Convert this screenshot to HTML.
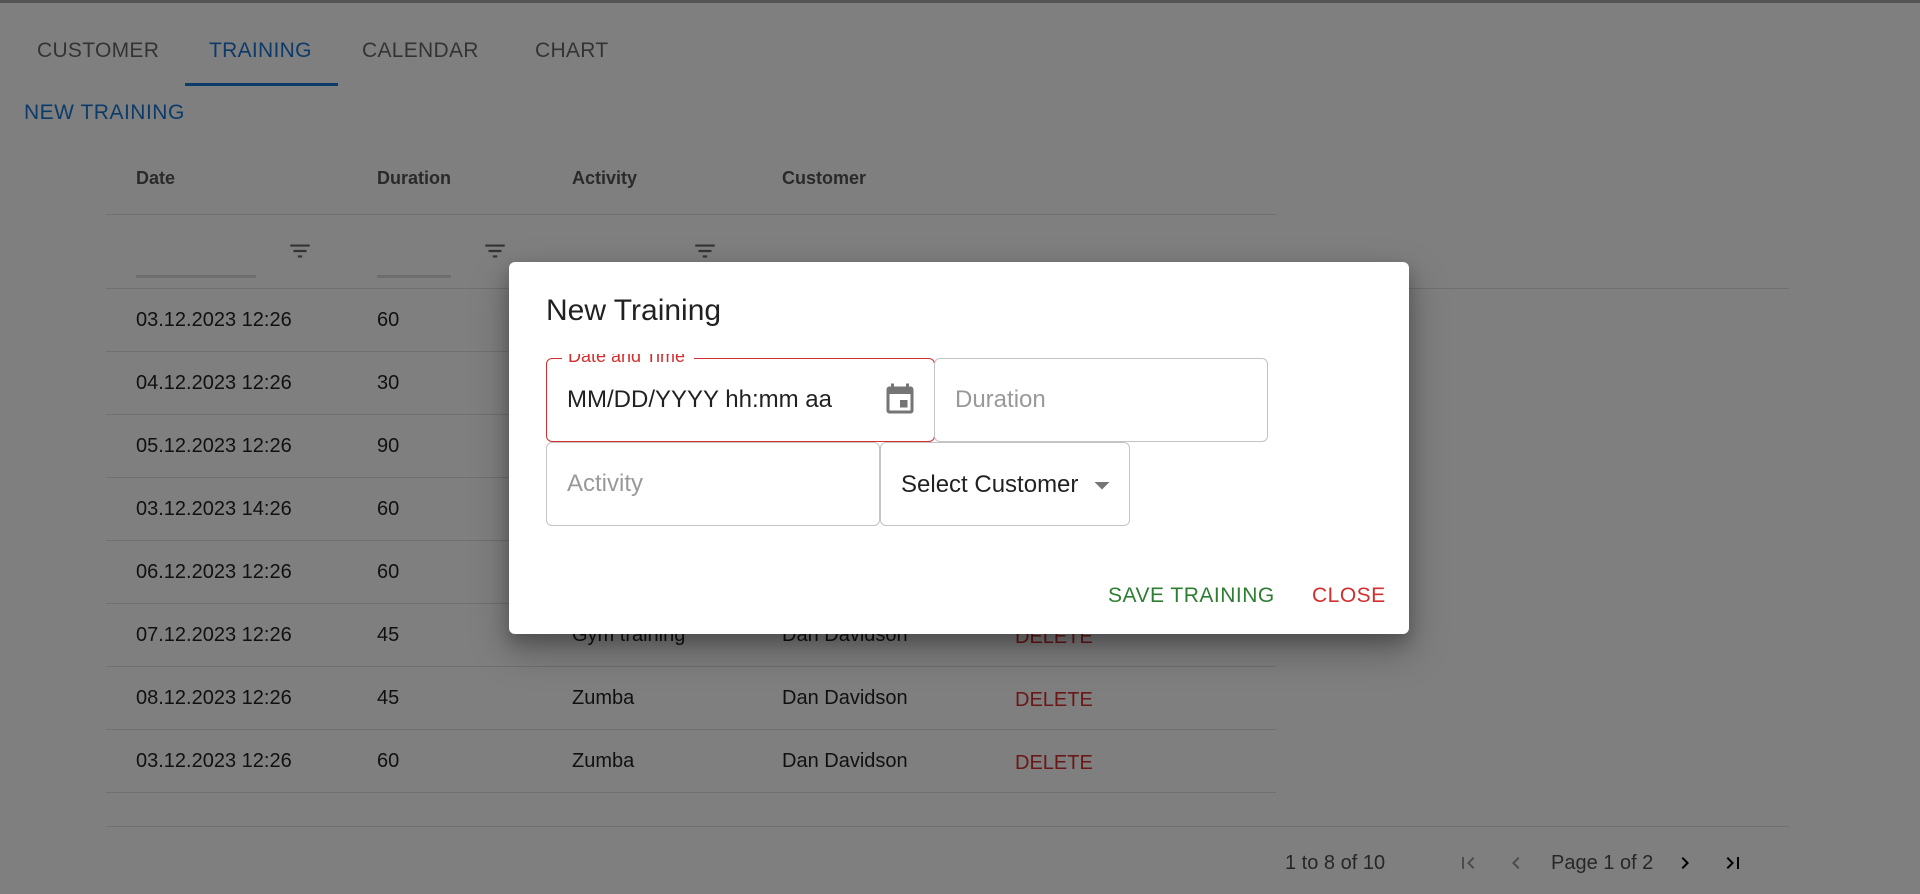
<!DOCTYPE html>
<html><head><meta charset="utf-8"><style>
*{margin:0;padding:0;box-sizing:border-box}
body{width:1920px;height:894px;overflow:hidden;background:#fff;font-family:"Liberation Sans",Arial,sans-serif;position:relative;color:rgba(0,0,0,.87)}
.a{position:absolute;white-space:nowrap}
.tab{font-size:21px;top:39px;color:rgba(0,0,0,.6);letter-spacing:.3px}
.h{font-size:18px;font-weight:bold;top:168px;color:#555}
.c{font-size:20px;line-height:20px}
.line{position:absolute;height:1px;background:#e0e0e0}
.del{color:#d32f2f}
.f{position:absolute;border:1px solid #c4c4c4;border-radius:6px}
</style></head><body>
<div class="a" style="left:0;top:0;width:1920px;height:3px;background:#aaa"></div>
<div class="a tab" style="left:37px">CUSTOMER</div>
<div class="a tab" style="left:209px;color:#1976d2">TRAINING</div>
<div class="a tab" style="left:362px">CALENDAR</div>
<div class="a tab" style="left:535px">CHART</div>
<div class="a" style="left:185px;top:83px;width:153px;height:3px;background:#1976d2"></div>
<div class="a" style="left:24px;top:101px;font-size:21px;color:#1976d2;letter-spacing:.5px">NEW TRAINING</div>

<div class="a h" style="left:136px">Date</div>
<div class="a h" style="left:377px">Duration</div>
<div class="a h" style="left:572px">Activity</div>
<div class="a h" style="left:782px">Customer</div>
<div class="line" style="left:106px;top:214px;width:1170px"></div>
<div class="a" style="left:136px;top:275px;width:120px;height:3px;background:#ddd"></div>
<div class="a" style="left:377px;top:275px;width:74px;height:3px;background:#ddd"></div>
<svg class="a" style="left:287px;top:238px" width="26" height="26" viewBox="0 0 24 24"><path fill="#666" d="M10 18h4v-2h-4v2zM3 6v2h18V6H3zm3 7h12v-2H6v2z"/></svg>
<svg class="a" style="left:482px;top:238px" width="26" height="26" viewBox="0 0 24 24"><path fill="#666" d="M10 18h4v-2h-4v2zM3 6v2h18V6H3zm3 7h12v-2H6v2z"/></svg>
<svg class="a" style="left:692px;top:238px" width="26" height="26" viewBox="0 0 24 24"><path fill="#666" d="M10 18h4v-2h-4v2zM3 6v2h18V6H3zm3 7h12v-2H6v2z"/></svg>
<div class="line" style="left:106px;top:288px;width:1683px"></div>

<div id="rows"></div>
<div class="line" style="left:106px;top:826px;width:1683px"></div>
<div class="a c" style="left:1285px;top:853px;color:rgba(0,0,0,.7)">1 to 8 of 10</div>
<svg class="a" style="left:1456px;top:851px" width="24" height="24" viewBox="0 0 24 24"><path fill="#999" d="M18.41 16.59L13.82 12l4.59-4.59L17 6l-6 6 6 6zM6 6h2v12H6z"/></svg>
<svg class="a" style="left:1504px;top:851px" width="24" height="24" viewBox="0 0 24 24"><path fill="#999" d="M15.41 16.59L10.83 12l4.58-4.59L14 6l-6 6 6 6z"/></svg>
<div class="a c" style="left:1551px;top:853px;color:rgba(0,0,0,.7)">Page 1 of 2</div>
<svg class="a" style="left:1673px;top:851px" width="24" height="24" viewBox="0 0 24 24"><path fill="#000" d="M8.59 16.59L13.17 12 8.59 7.41 10 6l6 6-6 6z"/></svg>
<svg class="a" style="left:1721px;top:851px" width="24" height="24" viewBox="0 0 24 24"><path fill="#000" d="M5.59 7.41L10.18 12l-4.59 4.59L7 18l6-6-6-6zM16 6h2v12h-2z"/></svg>

<div class="a" style="left:0;top:0;width:1920px;height:894px;background:rgba(0,0,0,.5)"></div>

<div class="a" style="left:509px;top:262px;width:900px;height:372px;background:#fff;border-radius:6px;box-shadow:0 16px 36px 3px rgba(0,0,0,.25),0 8px 16px rgba(0,0,0,.2)">
  <div class="a" style="left:37px;top:32px;font-size:30px;color:rgba(0,0,0,.87)">New Training</div>
  <div class="f" style="left:37px;top:96px;width:389px;height:84px;border-color:#d32f2f"></div>
  <div class="a" style="left:53px;top:92px;height:9px;overflow:hidden;background:#fff;padding:0 6px;width:132px"><span class="a" style="left:6px;top:-7px;font-size:18px;line-height:18px;color:#d32f2f">Date and Time</span></div>
  <div class="a" style="left:58px;top:126px;font-size:24px;line-height:24px">MM/DD/YYYY hh:mm aa</div>
  <svg class="a" style="left:373px;top:120px" width="36" height="36" viewBox="0 0 24 24"><path fill="#757575" d="M17 12h-5v5h5v-5zM16 1v2H8V1H6v2H5c-1.11 0-1.990.9-1.99 2L3 19c0 1.1.89 2 2 2h14c1.1 0 2-.9 2-2V5c0-1.1-.9-2-2-2h-1V1h-2zm3 18H5V8h14v11z"/></svg>
  <div class="f" style="left:425px;top:96px;width:334px;height:84px"></div>
  <div class="a" style="left:446px;top:126px;font-size:24px;line-height:24px;color:#999">Duration</div>
  <div class="f" style="left:37px;top:180px;width:334px;height:84px"></div>
  <div class="a" style="left:58px;top:210px;font-size:24px;line-height:24px;color:#999">Activity</div>
  <div class="f" style="left:371px;top:180px;width:250px;height:84px"></div>
  <div class="a" style="left:392px;top:211px;font-size:24px;line-height:24px">Select Customer</div>
  <svg class="a" style="left:575px;top:205px" width="36" height="36" viewBox="0 0 24 24"><path fill="#757575" d="M7 10l5 5 5-5z"/></svg>
  <div class="a" style="left:599px;top:322px;font-size:21px;color:#2e7d32;letter-spacing:.5px">SAVE TRAINING</div>
  <div class="a" style="left:803px;top:322px;font-size:21px;color:#d32f2f;letter-spacing:.5px">CLOSE</div>
</div>
<script>
var d=[["03.12.2023 12:26","60","Spinning"],["04.12.2023 12:26","30","Gym training"],["05.12.2023 12:26","90","Jogging"],["03.12.2023 14:26","60","Spinning"],["06.12.2023 12:26","60","Zumba"],["07.12.2023 12:26","45","Gym training"],["08.12.2023 12:26","45","Zumba"],["03.12.2023 12:26","60","Zumba"]];
var h="";d.forEach(function(r,i){var t=288+i*63+22;
h+='<div class="a c" style="left:136px;top:'+t+'px">'+r[0]+'</div><div class="a c" style="left:377px;top:'+t+'px">'+r[1]+'</div><div class="a c" style="left:572px;top:'+t+'px">'+r[2]+'</div><div class="a c" style="left:782px;top:'+t+'px">Dan Davidson</div><div class="a c del" style="left:1015px;top:'+(t+2)+'px">DELETE</div><div class="line" style="left:106px;top:'+(351+i*63)+'px;width:1170px"></div>';});
document.getElementById("rows").outerHTML=h;
</script>
</body></html>
